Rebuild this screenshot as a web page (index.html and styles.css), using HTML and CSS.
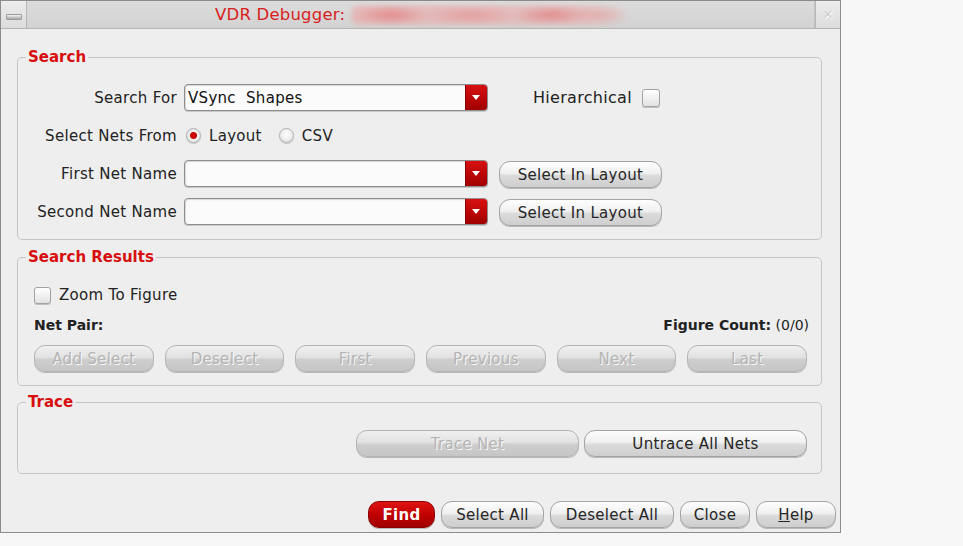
FILE: index.html
```html
<!DOCTYPE html>
<html lang="en">
<head>
    <meta charset="UTF-8">
    <title>VDR Debugger</title>
    <link rel="stylesheet" href="styles.css">
</head>
<body>
    <div class="window">
        <div class="titlebar">
            <div class="tb-btn"><span class="min-glyph"></span></div>
            <div class="tb-title">
                <span class="title-text">VDR Debugger:</span>
                <span class="title-blur"></span>
            </div>
            <div class="tb-btn close"><span class="close-glyph">&#x2715;</span></div>
        </div>

        <div class="content">
            <fieldset class="group search">
                <legend>Search</legend>
                <div class="search-grid">
                    <label class="lbl">Search For</label>
                    <div class="combo"><span class="combo-text">VSync&nbsp; Shapes</span><span class="combo-arrow"></span></div>
                    <div class="hier">Hierarchical <span class="check"></span></div>

                    <label class="lbl">Select Nets From</label>
                    <div class="radios">
                        <span class="radio on"></span><span class="radio-lbl">Layout</span>
                        <span class="radio"></span><span class="radio-lbl">CSV</span>
                    </div>
                    <div></div>

                    <label class="lbl">First Net Name</label>
                    <div class="combo"><span class="combo-text"></span><span class="combo-arrow"></span></div>
                    <div><button class="btn sel">Select In Layout</button></div>

                    <label class="lbl">Second Net Name</label>
                    <div class="combo"><span class="combo-text"></span><span class="combo-arrow"></span></div>
                    <div><button class="btn sel">Select In Layout</button></div>
                </div>
            </fieldset>

            <fieldset class="group results">
                <legend>Search Results</legend>
                <div class="group-body">
                    <div class="zoom-row"><span class="check"></span> Zoom To Figure</div>
                    <div class="pair-row">
                        <span class="bold">Net Pair:</span>
                        <span><span class="bold">Figure Count:</span> (0/0)</span>
                    </div>
                    <div class="nav-row">
                        <button class="btn off">Add Select</button>
                        <button class="btn off">Deselect</button>
                        <button class="btn off">First</button>
                        <button class="btn off">Previous</button>
                        <button class="btn off">Next</button>
                        <button class="btn off">Last</button>
                    </div>
                </div>
            </fieldset>

            <fieldset class="group trace">
                <legend>Trace</legend>
                <div class="trace-row">
                    <button class="btn off wide">Trace Net</button>
                    <button class="btn wide">Untrace All Nets</button>
                </div>
            </fieldset>

            <div class="footer">
                <button class="btn find">Find</button>
                <button class="btn f-sel">Select All</button>
                <button class="btn f-desel">Deselect All</button>
                <button class="btn f-close">Close</button>
                <button class="btn f-help"><u>H</u>elp</button>
            </div>
        </div>
    </div>
</body>
</html>
```

FILE: styles.css
```css
body {
    margin: 0;
    background-color: #f7f7f7;
    font-family: 'DejaVu Sans', 'Liberation Sans', sans-serif;
    font-size: 15px;
    letter-spacing: 0.3px;
    color: #222;
}
.window {
    width: 839px;
    height: 531px;
    border: 1px solid #8c8c8c;
    background-color: #eeeeee;
    display: flex;
    flex-direction: column;
}
.titlebar {
    display: flex;
    height: 27px;
    border-bottom: 1px solid #b4b4b4;
    background-color: #e6e6e6;
}
.tb-btn {
    width: 25px;
    display: flex;
    justify-content: center;
    align-items: center;
    border-right: 1px solid #b8b8b8;
    background: linear-gradient(#ececec, #dcdcdc);
}
.tb-btn.close {
    border-right: none;
    border-left: 1px solid #b8b8b8;
    width: 24px;
}
.min-glyph {
    width: 14px;
    height: 4px;
    margin-top: 5px;
    border-radius: 1px;
    background: linear-gradient(#f4f4f4, #a6a6a6);
    border: 1px solid #9a9a9a;
}
.close-glyph {
    color: #d0d0d0;
    font-size: 13px;
    font-weight: bold;
    text-shadow: 1px 1px 0 #fff;
}
.tb-title {
    flex: 1;
    display: flex;
    align-items: center;
    padding-left: 188px;
    background: linear-gradient(#dcdcdc, #d2d2d2);
    border-right: 1px solid #c2c2c2;
}
.title-text {
    color: #d81e1e;
    font-size: 16.5px;
    letter-spacing: 0.2px;
}
.title-blur {
    margin-left: 6px;
    width: 276px;
    height: 20px;
    border-radius: 8px;
    background:
        radial-gradient(ellipse 40px 10px at 40px 10px, rgba(228, 120, 120, 0.7), transparent),
        radial-gradient(ellipse 50px 10px at 120px 10px, rgba(230, 140, 140, 0.6), transparent),
        radial-gradient(ellipse 40px 10px at 200px 10px, rgba(226, 120, 120, 0.7), transparent),
        radial-gradient(ellipse 30px 9px at 250px 10px, rgba(232, 150, 150, 0.5), transparent),
        linear-gradient(90deg, rgba(236, 170, 170, 0.6), rgba(236, 170, 170, 0.5) 85%, transparent);
    filter: blur(2px);
}
.content {
    padding: 0 18px 0 16px;
}
.group {
    margin: 0;
    border: 1px solid #c6c6c6;
    border-radius: 5px;
    min-width: 0;
}
.group legend {
    margin-left: 8px;
    padding: 0 2px;
    color: #d80f0f;
    font-weight: bold;
    line-height: 16px;
    letter-spacing: 0;
}
.search {
    margin-top: 20px;
    padding: 19px 0 14px 0;
}
.search-grid {
    display: grid;
    grid-template-columns: 159px 304px auto;
    grid-auto-rows: 27px;
    column-gap: 7px;
    row-gap: 11px;
    align-items: center;
}
.lbl {
    text-align: right;
    padding-top: 1px;
}
.combo {
    display: flex;
    height: 25px;
    border: 1px solid #8e8e8e;
    border-radius: 4px;
    background-color: #fbfbfb;
    box-shadow: inset 1px 1px 1px #d8d8d8, 0 1px 0 #c8c8c8;
}
.combo-text {
    flex: 1;
    padding-left: 3px;
    line-height: 26px;
    color: #111;
}
.combo-arrow {
    width: 21px;
    border-left: 1px solid #8a0000;
    border-radius: 0 3px 3px 0;
    background: linear-gradient(#d81010, #a00000);
    position: relative;
}
.combo-arrow::after {
    content: '';
    position: absolute;
    left: 6px;
    top: 10px;
    border-left: 4px solid transparent;
    border-right: 4px solid transparent;
    border-top: 5px solid #fff;
}
.hier {
    margin-left: 38px;
    display: flex;
    align-items: center;
    gap: 10px;
    font-size: 16px;
}
.check {
    display: inline-block;
    width: 15px;
    height: 15px;
    border: 1px solid #a2a2a2;
    border-radius: 3px;
    background: linear-gradient(#ffffff, #e2e2e2);
    box-shadow: 0 1px 0 #c0c0c0;
}
.hier .check {
    width: 16px;
    height: 16px;
}
.radios {
    display: flex;
    align-items: center;
    padding-left: 2px;
}
.radio {
    width: 13px;
    height: 13px;
    border: 1px solid #b0b0b0;
    border-radius: 50%;
    background: radial-gradient(circle at 50% 40%, #ffffff, #dcdcdc);
    box-shadow: 0 1px 1px #c4c4c4;
}
.radio.on {
    background: radial-gradient(circle, #e00000 0, #c00000 3px, #f2f2f2 4px, #d6d6d6);
}
.radio-lbl {
    margin: 0 17px 0 8px;
}
.btn {
    font-family: 'DejaVu Sans', 'Liberation Sans', sans-serif;
    font-size: 15px;
    letter-spacing: 0.3px;
    color: #262626;
    height: 27px;
    padding: 0;
    border: 1px solid #a4a4a4;
    border-radius: 11px;
    background: linear-gradient(#fefefe, #f0f0f0 45%, #dadada 55%, #cfcfcf);
    box-shadow: 0 1px 0 #b8b8b8;
}
.btn.off {
    color: #b4b4b4;
    text-shadow: 1px 1px 0 #fafafa;
    background: linear-gradient(#f0f0f0, #e2e2e2 45%, #cdcdcd 55%, #c6c6c6);
    border-color: #b4b4b4;
}
.btn.sel {
    width: 163px;
    margin: 2px 0 0 4px;
}
.results {
    margin-top: 9px;
    padding: 21px 0 13px 0;
}
.group-body {
    padding: 0 14px 0 16px;
}
.zoom-row {
    display: flex;
    align-items: center;
    gap: 8px;
    height: 18px;
}
.pair-row {
    display: flex;
    justify-content: space-between;
    margin: 12px -2px 0 0;
    height: 18px;
    line-height: 18px;
    font-size: 14px;
    letter-spacing: 0;
}
.bold {
    font-weight: bold;
}
.nav-row {
    display: flex;
    gap: 11px;
    margin-top: 11px;
}
.nav-row .btn {
    width: 120px;
}
.trace {
    margin-top: 8px;
    padding: 20px 14px 16px 0;
}
.trace-row {
    display: flex;
    justify-content: flex-end;
    gap: 5px;
}
.btn.wide {
    width: 223px;
}
.footer {
    display: flex;
    justify-content: flex-end;
    gap: 6px;
    margin: 27px -14px 0 0;
}
.btn.find {
    width: 67px;
    color: #fff;
    font-weight: bold;
    border-color: #8a0000;
    background: linear-gradient(#e01414, #c00000 50%, #a00000);
}
.f-sel { width: 103px; }
.f-desel { width: 124px; }
.f-close { width: 70px; }
.f-help { width: 80px; }
```
